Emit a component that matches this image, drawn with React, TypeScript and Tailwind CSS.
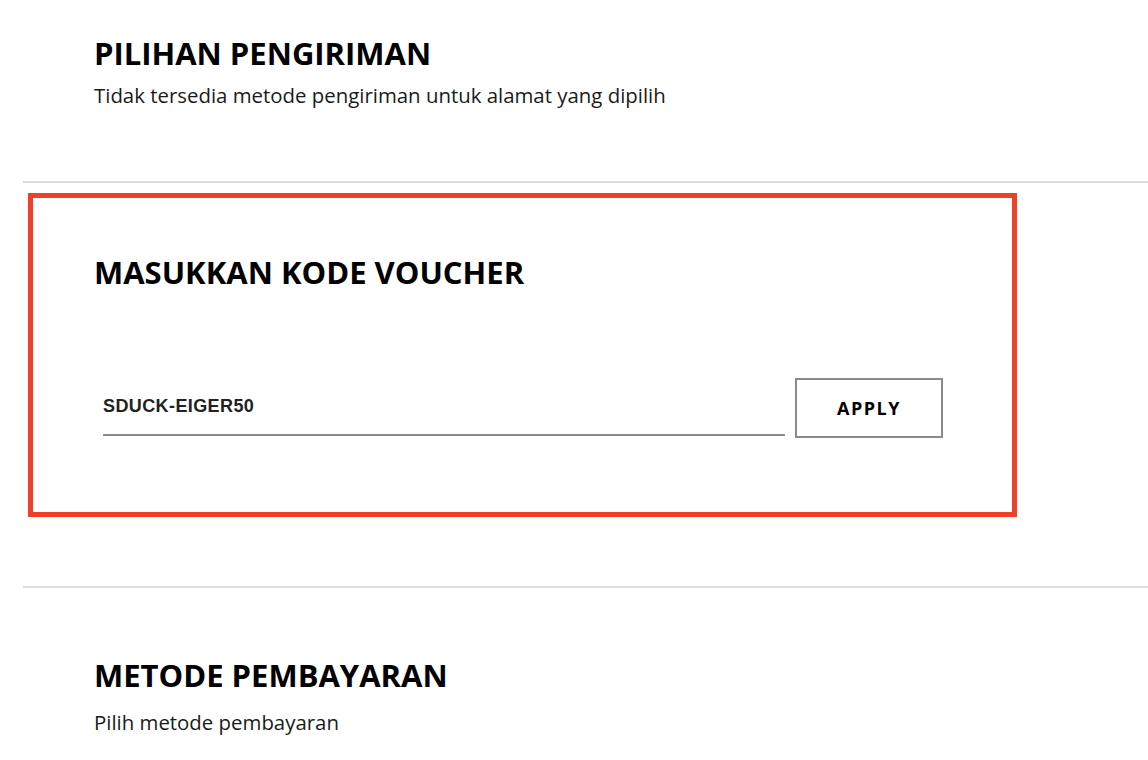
import { useState } from 'react';

export default function App() {
    const [voucher, setVoucher] = useState('SDUCK-EIGER50');

    return (
        <div className="min-h-[760px] w-full bg-white pl-[23px] font-['Open_Sans',sans-serif] text-black">
            {/* Shipping */}
            <section className="pl-[71px] pt-[34px] pb-[73px]">
                <h2 className="text-[31px] leading-[38px] font-bold">PILIHAN PENGIRIMAN</h2>
                <p className="mt-[10px] text-[20.4px] leading-[26px] text-[#1a1a1a]">
                    Tidak tersedia metode pengiriman untuk alamat yang dipilih
                </p>
            </section>

            <div className="h-[2px] bg-[#dddddd]" />

            {/* Voucher */}
            <div className="ml-[5px] mt-[10px] w-[989px] border-[5px] border-[#ee4026] pl-[61px] pr-[69px] pt-[55px] pb-[74px]">
                <h2 className="text-[31px] leading-[38px] font-bold">MASUKKAN KODE VOUCHER</h2>
                <div className="mt-[87px] flex items-start gap-[10px] pl-[9px]">
                    <div className="h-[58px] flex-1 border-b-2 border-[#8a8a8a] pt-4">
                        <input
                            value={voucher}
                            onChange={e => setVoucher(e.target.value)}
                            className="w-full bg-transparent font-['Liberation_Sans',Arial,sans-serif] text-[18px] leading-[20px] font-bold tracking-[0.4px] text-[#222] outline-none"
                        />
                    </div>
                    <button
                        type="button"
                        className="h-[60px] w-[148px] border-2 border-[#8a8a8a] bg-white text-[18px] font-bold tracking-[1.5px] text-black"
                    >
                        APPLY
                    </button>
                </div>
            </div>

            <div className="mt-[69px] h-[2px] bg-[#dddddd]" />

            {/* Payment */}
            <section className="pl-[71px] pt-[68px]">
                <h2 className="text-[31px] leading-[38px] font-bold">METODE PEMBAYARAN</h2>
                <p className="mt-[15px] text-[20.4px] leading-[26px] text-[#1a1a1a]">Pilih metode pembayaran</p>
            </section>
        </div>
    );
}
